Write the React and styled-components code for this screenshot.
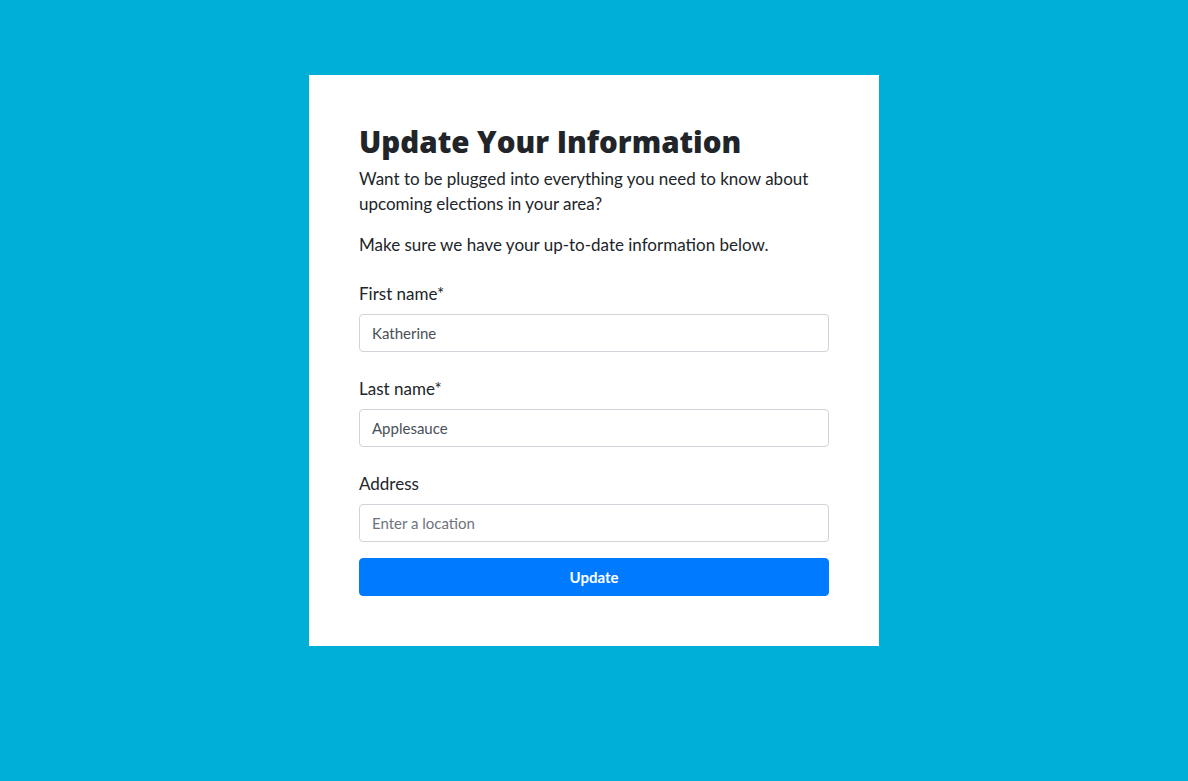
import React from "react";
import styled, { createGlobalStyle } from "styled-components";

const GlobalStyle = createGlobalStyle`
    html, body
    {
        margin: 0;
        padding: 0;
        background-color: #00afd6;
        font-family: "Lato", "Liberation Sans", sans-serif;
        color: #212529;
    }

    *
    {
        box-sizing: border-box;
    }
`;

const Field = ({ label, value, placeholder, last }) =>
{
    return(
        <Group last={last}>
            <Label>{label}</Label>
            <Input defaultValue={value} placeholder={placeholder} />
        </Group>
    )
}

const App = () =>
{
    return(
        <>
            <GlobalStyle />
            <Page>
                <Card>
                    <Title>Update Your Information</Title>
                    <Text>
                        Want to be plugged into everything you need to know about
                        upcoming elections in your area?
                    </Text>
                    <Text last>Make sure we have your up-to-date information below.</Text>

                    <form onSubmit={e => e.preventDefault()}>
                        <Field label="First name*" value="Katherine" />
                        <Field label="Last name*" value="Applesauce" />
                        <Field label="Address" placeholder="Enter a location" last />
                        <Button type="submit">Update</Button>
                    </form>
                </Card>
            </Page>
        </>
    )
}

export default App;

const Page = styled.main`
    min-height: 100vh;
    display: flex;
    justify-content: center;
    align-items: flex-start;
    padding-top: 75px;
`;

const Card = styled.section`
    width: 570px;
    background-color: #ffffff;
    padding: 50px 50px 50px;
`;

const Title = styled.h1`
    margin: 0 0 8px;
    font-family: "Open Sans", "Liberation Sans", sans-serif;
    font-weight: 800;
    font-size: 29.5px;
    line-height: 33px;
    color: #212529;
`;

const Text = styled.p`
    margin: 0 0 ${props => props.last ? 24 : 16}px;
    font-size: 17px;
    line-height: 25px;
    color: #212529;
`;

const Group = styled.div`
    margin-bottom: ${props => props.last ? 16 : 24}px;
`;

const Label = styled.label`
    display: block;
    margin-bottom: 8px;
    font-size: 17px;
    line-height: 25px;
    color: #212529;
`;

const Input = styled.input`
    display: block;
    width: 100%;
    height: 38px;
    padding: 6px 12px;
    font-family: "Lato", "Liberation Sans", sans-serif;
    font-size: 15px;
    color: #495057;
    background-color: #ffffff;
    border: 1px solid #ced4da;
    border-radius: 4px;
    outline: none;

    &::placeholder
    {
        color: #6c757d;
        opacity: 1;
    }
`;

const Button = styled.button`
    display: block;
    width: 100%;
    height: 38px;
    font-family: "Lato", "Liberation Sans", sans-serif;
    font-size: 15px;
    font-weight: 700;
    color: #ffffff;
    background-color: #007bff;
    border: 1px solid #007bff;
    border-radius: 4px;
    cursor: pointer;
`;
